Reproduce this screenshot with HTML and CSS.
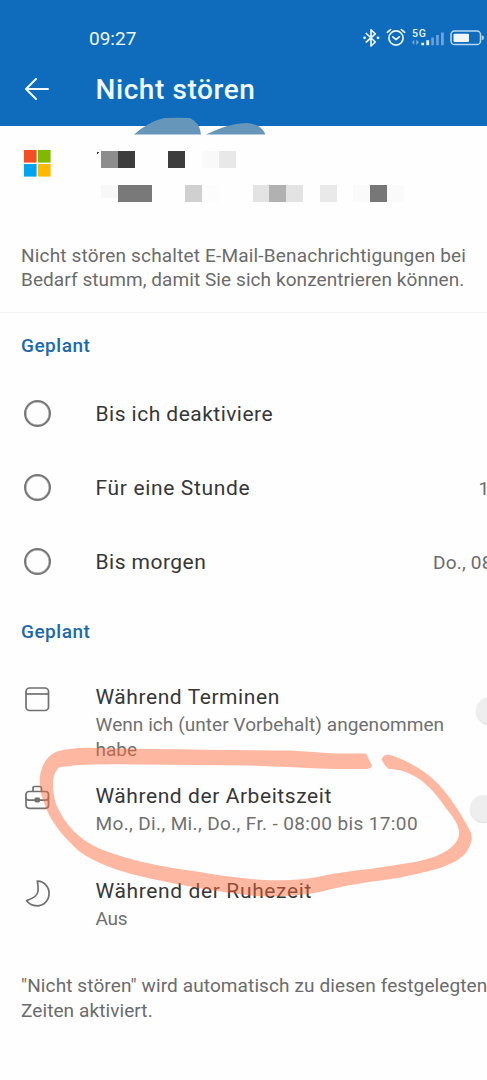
FILE: index.html
```html
<!DOCTYPE html>
<html lang="de">
<head>
<meta charset="utf-8">
<title>Nicht stören</title>
<link rel="stylesheet" href="styles.css">
</head>
<body>
<div class="screen">
  <header class="header">
    <div class="status">
      <span class="clock">09:27</span>
      <svg class="status-icons" width="125" height="24" viewBox="0 0 125 24" fill="none">
        <g stroke="#e9f5ff" stroke-width="1.7" stroke-linejoin="round" stroke-linecap="round">
          <path d="M4.3 7.5 13.3 16 9 20V3.8L13.3 7.8 4.3 16"/>
          <circle cx="34" cy="12" r="7.1"/>
          <path d="M30.8 10.8 34 13.7 37.3 10.8M25.3 6.3 28.6 3.6M39.4 3.6 42.7 6.3"/>
        </g>
        <g fill="#e9f5ff"><circle cx="2.6" cy="11.8" r="1.4"/><circle cx="16" cy="11.8" r="1.4"/></g>
        <text class="network" x="50" y="11" textLength="14">5G</text>
        <path d="M50 16.5 52.3 13.5V19ZM57 16.5 54.3 13.5V19Z" fill="#78abdc"/>
        <path d="M59.3 16.8h2.8v2.4h-2.8ZM64.3 14.3h2.8v4.900h-2.8Z" fill="#e9f5ff"/>
        <path d="M69.3 11.5h2.6v7.7h-2.6ZM74.2 9h2.6v10.2h-2.6ZM79 6.4h2.8v12.8H79Z" fill="#69a5dc"/>
        <rect x="89" y="5" width="29.5" height="13.6" rx="3.6" stroke="#b9d8f2" stroke-width="1.5"/>
        <rect x="91.500" y="7.700" width="15.500" height="8.300" rx="1" fill="#edf5fd"/>
        <path d="M119.7 9.7h1.1q1 0 1 1v2q0 1-1 1h-1.1Z" fill="#b9d8f2"/>
      </svg>
    </div>
    <div class="appbar">
      <svg class="back" width="26" height="24" viewBox="0 0 26 24" fill="none" stroke="#f2f9ff" stroke-width="2" stroke-linecap="round" stroke-linejoin="round"><path d="M24 12H2M12 2 2 12 12 22"/></svg>
      <h1 class="title">Nicht stören</h1>
    </div>
    <svg class="smudge" width="132" height="18" viewBox="134 117 132 18" fill="#6696ba"><path d="M134 134.500Q148 122 164 118Q178 117.300 190 118Q200 123 201 134.500ZM206 134.500Q229 123 247 123Q261 124 265.500 134.500Z"/></svg>
  </header>

  <section class="account">
    <svg class="logo" width="27" height="27" viewBox="0 0 27 27"><path fill="#f25022" d="M0 0h12.600v12.600H0z"/><path fill="#7fba00" d="M14 0h12.600v12.600H14z"/><path fill="#00a4ef" d="M0 14h12.600v12.600H0z"/><path fill="#ffb900" d="M14 14h12.600v12.600H14z"/></svg>
    <svg class="mosaic" width="308" height="51" viewBox="97 151 308 51" shape-rendering="crispEdges">
      <path fill="#444" d="M97 152h2v1h-1v1h-1z"/>
      <path fill="#8d8d8d" d="M101 151h17v17h-17z"/><path fill="#3d3d3d" d="M118 151h17v17h-17zM168 151h17v17h-17z"/>
      <path fill="#f9f9f9" d="M202 151h17v17h-17z"/><path fill="#e8e8e8" d="M219 151h17v17h-17z"/>
      <path fill="#f8f8f8" d="M101 185h17v13h-17z"/><path fill="#797979" d="M118 185h34v17h-34z"/>
      <path fill="#d0d0d0" d="M185 185h17v17h-17z"/><path fill="#fcfcfc" d="M202 185h17v17h-17z"/>
      <path fill="#e3e3e3" d="M253 185h50v17h-50z"/><path fill="#b1b1b1" d="M269 185h17v17h-17z"/>
      <path fill="#e9e9e9" d="M320 185h17v17h-17z"/><path fill="#fafafa" d="M353 185h51v17h-51z"/><path fill="#777" d="M370 185h17v17h-17z"/>
    </svg>
  </section>

  <p class="note intro"><span class="line i1">Nicht stören schaltet E-Mail-Benachrichtigungen bei</span><span class="line i2">Bedarf stumm, damit Sie sich konzentrieren können.</span></p>

  <h2 class="section">Geplant</h2>
  <div class="option"><span class="radio"></span><span class="label">Bis ich deaktiviere</span></div>
  <div class="option"><span class="radio"></span><span class="label o2">Für eine Stunde</span><span class="when">1</span></div>
  <div class="option"><span class="radio"></span><span class="label">Bis morgen</span><span class="when">Do., 08</span></div>

  <h2 class="section second">Geplant</h2>
  <div class="rules">
    <div class="rule">
      <svg class="icon" width="27" height="27" viewBox="0 0 27 27" fill="none" stroke="#707070" stroke-width="1.700"><rect x="2" y="2" width="22.500" height="22.500" rx="3.600"/><path d="M2 8h22.500"/></svg>
      <div class="body"><div class="name">Während Terminen</div><div class="sub"><span class="line s1">Wenn ich (unter Vorbehalt) angenommen</span><span class="line">habe</span></div></div>
      <span class="toggle"></span>
    </div>
    <div class="rule work">
      <svg class="icon" width="27" height="27" viewBox="0 0 27 27" fill="none" stroke="#707070" stroke-width="1.700"><rect x="2" y="6.500" width="22.500" height="16.800" rx="3"/><path d="M9 6.500V3.200q0-1.700 1.700-1.700h5.100q1.700 0 1.700 1.700v3.300M2 12.500q0 2.600 2.600 2.600h17.300q2.600 0 2.600-2.600"/><rect x="10.500" y="12.500" width="5.500" height="5" rx="1.400" fill="#707070" stroke="none"/></svg>
      <div class="body"><div class="name">Während der Arbeitszeit</div><div class="sub"><span class="line s3">Mo., Di., Mi., Do., Fr. - 08:00 bis 17:00</span></div></div>
      <span class="toggle"></span>
    </div>
    <div class="rule rest">
      <svg class="icon" width="27" height="28" viewBox="0 0 27 28" fill="none" stroke="#707070" stroke-width="1.700" stroke-linejoin="round"><path d="M13.300 1.200C20 1 25.200 7 25.100 13.500C25 20.500 19.500 25.900 13 25.900C8.500 25.900 4.700 23.800 2.500 20.600C8.500 18.800 13.500 16 14.100 11Q14.500 7 13.300 1.200Z"/></svg>
      <div class="body"><div class="name n3">Während der Ruhezeit</div><div class="sub"><span class="line s4">Aus</span></div></div>
    </div>
    <svg class="marker" width="436" height="154" viewBox="38 745 436 154" fill="#ff6b3a" fill-opacity=".47">
      <path d="M366 753.500 372 765.500Q371 768.500 367 769L335 769Q290 767 250 765.500L140 764.500Q80 763 59 767.500C51 775 52 790 56 804C64 824 79 839 98 848C125 859 155 866 200 872C235 878 260 880.500 277 880.300Q305 880 320 876.500Q340 872 370 869L415 862C445 856 459 845 459 833C460 823 448 812 440 800C423 777 405 769 388.500 769Q384 765 381.500 759Q384 754.500 388 754.500C407 760 427 771 441 787C454 802 464 819 471 833Q474 842 465 854C451 868 425 872 398 878C369 882 345 885 320 892Q290 897.500 255 896C220 892 185 886.500 150 878.500C115 871 95 862 80 852C63 837 49 820 43 800Q38 787 40.500 773Q44 757 57 751.500Q74 747 96 748L150 749Q230 750 290 750.500L335 753.500Z"/>
    </svg>
  </div>
  <p class="note outro"><span class="line f1">"Nicht stören" wird automatisch zu diesen festgelegten</span><span class="line f2">Zeiten aktiviert.</span></p>
</div>
</body>
</html>
```

FILE: styles.css
```css
* { box-sizing: border-box; }
body { margin: 0; background: #fefefe; }
.screen { width: 487px; height: 1080px; overflow: hidden; background: #fefefe; font-family: Roboto, "Noto Sans", sans-serif; color: #363636; }
h1, h2, p { margin: 0; font-weight: 400; }
.line { display: block; white-space: nowrap; }

.header { position: relative; height: 126px; background: #0f6cbd; color: #f0f9ff; }
.status { display: flex; align-items: center; height: 63px; padding: 13px 0 0 89px; }
.clock { width: 273px; font-size: 19px; }
.status-icons { flex: none; }
.network { font: 500 10.5px Roboto, sans-serif; fill: #e9f5ff; }
.appbar { display: flex; align-items: center; height: 52px; padding-left: 24px; }
.back { flex: none; margin-right: 45.5px; }
.title { font-size: 28px; font-weight: 500; letter-spacing: .58px; white-space: nowrap; }
.smudge { position: absolute; left: 134px; top: 117px; }

.account { display: flex; height: 117.5px; padding: 24px 0 0 24px; }
.logo { margin-right: 46px; margin-top: -.5px; }
.mosaic { margin-top: 1px; }

.note { padding-left: 21px; font-size: 19px; line-height: 24.6px; color: #6b6b6b; }
.intro { height: 69.5px; border-bottom: 1px solid #f2f2f2; }
.i1 { letter-spacing: .18px; }
.i2 { letter-spacing: .08px; }
.section { display: flex; align-items: center; height: 64px; padding-left: 21px; font-size: 19px; font-weight: 500; letter-spacing: .5px; color: #1b69ad; }
.second { height: 65px; }

.option { display: flex; align-items: center; height: 74px; padding-left: 23.5px; overflow: hidden; white-space: nowrap; }
.radio { flex: none; width: 27px; height: 27px; margin: -1px 45px 0 0; border: 2.5px solid #777; border-radius: 50%; box-shadow: inset 0 0 0 .5px #999; }
.label { flex: none; width: 337.5px; font-size: 21px; letter-spacing: .47px; }
.o2 { width: 383px; letter-spacing: .65px; }
.when { font-size: 19px; letter-spacing: .2px; color: #6b6b6b; }

.rules { position: relative; padding-top: 19px; }
.rule { display: flex; padding-left: 23.5px; height: 99px; }
.work { height: 95px; }
.rest { height: 97px; }
.icon { flex: none; margin: 3px 45px 0 0; }
.body { width: 380px; flex: none; }
.name { font-size: 21px; line-height: 28px; letter-spacing: .57px; white-space: nowrap; }
.n3 { letter-spacing: .63px; }
.sub { margin-top: 2px; font-size: 19px; line-height: 24.6px; color: #707070; }
.s1 { letter-spacing: .06px; }
.s3 { letter-spacing: .37px; }
.s4 { letter-spacing: -.3px; }
.toggle { flex: none; width: 27px; height: 27px; margin-top: 13.5px; border-radius: 50%; background: #eee; box-shadow: 0 1px 1px #ddd; }
.work .toggle { margin: 13px 0 0 -6px; }
.marker { position: absolute; left: 38px; top: 81px; }
.f1 { letter-spacing: .11px; }
.f2 { letter-spacing: .09px; }
```
